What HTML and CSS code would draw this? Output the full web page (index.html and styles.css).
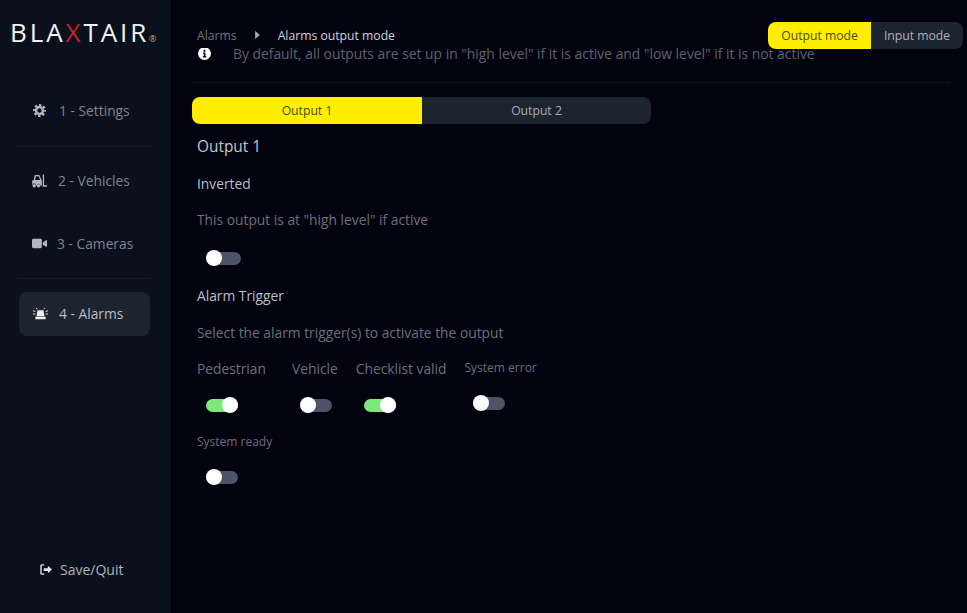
FILE: index.html
```html
<!DOCTYPE html>
<html lang="en">
<head>
    <meta charset="UTF-8">
    <meta name="viewport" content="width=device-width, initial-scale=1.0">
    <title>Blaxtair - Alarms output mode</title>
    <link rel="stylesheet" href="styles.css">
</head>
<body>
    <div class="app">
        <aside class="sidebar">
            <div class="logo">BLA<span class="logo-red">X</span>TAIR<span class="logo-reg">®</span></div>
            <nav class="nav">
                <a class="nav-item nav-settings">
                    <svg class="nav-icon" viewBox="0 0 16 16">
                        <circle cx="8" cy="8" r="4.200" fill="none" stroke="currentColor" stroke-width="3"/>
                        <circle cx="8" cy="8" r="6.600" fill="none" stroke="currentColor" stroke-width="2.800" stroke-dasharray="2.900 2.280" stroke-dashoffset="1.450"/>
                    </svg>
                    <span>1 - Settings</span>
                </a>
                <a class="nav-item nav-vehicles">
                    <svg class="nav-icon nav-icon-wide nav-icon-tall" viewBox="0 0 16 14"><path fill="currentColor" fill-rule="evenodd" d="M3 .5h4.800L10.500 6.500V12H9a2 2 0 0 0-4 0H4.200a2 2 0 0 0-4-.8V6.500L1.800 6zM4.200 1.800 3.300 6h5.600L7 1.800z"/><circle fill="currentColor" cx="2.300" cy="12" r="1.800"/><circle fill="currentColor" cx="7" cy="12" r="1.800"/><path fill="currentColor" d="M11.500 0h1.400v11.600H16V13h-4.500z"/></svg>
                    <span>2 - Vehicles</span>
                </a>
                <a class="nav-item nav-cameras">
                    <svg class="nav-icon nav-icon-wide" viewBox="0 0 16 12"><rect fill="currentColor" y="1" width="10.500" height="10" rx="1.500"/><path fill="currentColor" d="M11.500 4.800 15 2.500c.5-.3 1 0 1 .5v6c0 .5-.5.800-1 .5l-3.500-2.300z"/></svg>
                    <span>3 - Cameras</span>
                </a>
                <a class="nav-item nav-alarms">
                    <svg class="nav-icon nav-icon-wide" viewBox="0 0 16 13"><path fill="currentColor" d="M4.800 3h6.400l1 6.500H3.800zM2.500 10h11v2.500h-11z"/><path stroke="currentColor" stroke-width="1" d="M0 3.500l2.500 1M0 7h2.500M16 3.500l-2.500 1M16 7h-2.500M3.500 .5l1 1.500M12.500 .5l-1 1.500"/></svg>
                    <span>4 - Alarms</span>
                </a>
            </nav>
            <a class="save-quit">
                <svg class="save-icon" viewBox="0 0 14 12"><path fill="none" stroke="currentColor" stroke-width="1.500" d="M4.500 1H2a1 1 0 0 0-1 1v8a1 1 0 0 0 1 1h2.500"/><path fill="currentColor" d="M4 4.500h4.500V1.800L13 6l-4.500 4.200V7.500H4z"/></svg>
                <span>Save/Quit</span>
            </a>
        </aside>

        <main class="main">
            <header class="topbar">
                <div class="breadcrumb">
                    <span class="crumb-parent">Alarms</span>
                    <svg class="crumb-arrow" viewBox="0 0 6 10"><path fill="currentColor" d="M0 0l6 5-6 5z"/></svg>
                    <span class="crumb-current">Alarms output mode</span>
                </div>
                <div class="mode-switch">
                    <button class="mode-btn mode-active">Output mode</button>
                    <button class="mode-btn">Input mode</button>
                </div>
            </header>

            <div class="content">
                <div class="notice">
                    <svg class="notice-icon" viewBox="0 0 14 14"><circle fill="#fff" cx="7" cy="7" r="7"/><path fill="#03030f" d="M6 3h2v2H6zM5.500 6H8v4h1v1.200H5.200V10h1V7.200h-.7z"/></svg>
                    <span>By default, all outputs are set up in "high level" if it is active and "low level" if it is not active</span>
                </div>
                <div class="divider"></div>

                <div class="tabs">
                    <button class="tab tab-active">Output 1</button>
                    <button class="tab">Output 2</button>
                </div>

                <section class="form">
                    <h2 class="form-title">Output 1</h2>
                    <h3 class="form-heading">Inverted</h3>
                    <p class="form-text">This output is at "high level" if active</p>
                    <div class="toggle-line"><span class="toggle toggle-wide"></span></div>

                    <h3 class="form-heading heading-trigger">Alarm Trigger</h3>
                    <p class="form-text text-trigger">Select the alarm trigger(s) to activate the output</p>

                    <div class="triggers">
                        <div class="trigger trigger-first">
                            <label>Pedestrian</label>
                            <span class="toggle toggle-on"></span>
                        </div>
                        <div class="trigger">
                            <label>Vehicle</label>
                            <span class="toggle"></span>
                        </div>
                        <div class="trigger">
                            <label>Checklist valid</label>
                            <span class="toggle toggle-on"></span>
                        </div>
                        <div class="trigger trigger-small">
                            <label>System error</label>
                            <span class="toggle"></span>
                        </div>
                        <div class="trigger trigger-small trigger-first">
                            <label>System ready</label>
                            <span class="toggle"></span>
                        </div>
                    </div>
                </section>
            </div>
        </main>
    </div>
</body>
</html>
```

FILE: styles.css
```css
* {
    box-sizing: border-box;
}
html, body {
    height: 100%;
    margin: 0;
    font-family: 'Open Sans', 'Noto Sans', sans-serif;
    background-color: #03030f;
    color: #8b8e99;
}
button {
    font-family: inherit;
    border: none;
    cursor: pointer;
}
.app {
    display: flex;
    height: 613px;
    overflow: hidden;
}

/* sidebar */
.sidebar {
    width: 171px;
    flex-shrink: 0;
    display: flex;
    flex-direction: column;
    background-color: #0a111c;
}
.logo {
    height: 78px;
    padding: 17px 0 0 10px;
    font-size: 26px;
    line-height: 30px;
    font-weight: 400;
    letter-spacing: 2.9px;
    color: #f2f2f2;
    white-space: nowrap;
}
.logo-red {
    color: #c4202c;
}
.logo-reg {
    font-size: 9px;
    letter-spacing: 0;
    color: #aaa;
}
.nav {
    display: flex;
    flex-direction: column;
    padding: 0 21px 0 18px;
}
.nav-item {
    display: flex;
    align-items: center;
    font-size: 13.800px;
    color: #80848f;
}
.nav-icon {
    width: 13px;
    height: 13px;
    margin: 0 13px 0 15px;
    color: #b5b7bf;
}
.nav-icon-wide {
    width: 15px;
    margin: 0 10px 0 14px;
}
.nav-icon-tall {
    height: 14px;
    margin-right: 11px;
}
.nav-settings {
    height: 69px;
    padding-bottom: 3px;
    border-bottom: 1px solid #161d28;
}
.nav-vehicles {
    height: 69px;
    padding-bottom: 2px;
}
.nav-cameras {
    height: 63px;
    padding-bottom: 8px;
    border-bottom: 1px solid #161d28;
}
.nav-alarms {
    height: 44px;
    margin: 13px 0 0 1px;
    padding-bottom: 2px;
    border-radius: 8px;
    background-color: #1c2430;
    color: #b9bcc5;
}
.nav-alarms .nav-icon {
    margin-right: 11px;
    color: #f0f0f0;
}
.save-quit {
    display: flex;
    align-items: center;
    margin: auto 0 34px 40px;
    font-size: 14px;
    color: #b0b3bb;
}
.save-icon {
    width: 13px;
    height: 11px;
    margin-right: 7px;
    color: #e6e6e6;
}

/* main */
.main {
    flex: 1;
    display: flex;
    flex-direction: column;
    min-width: 0;
    overflow: hidden;
}
.topbar {
    position: relative;
    z-index: 2;
    height: 48px;
    flex-shrink: 0;
    display: flex;
    align-items: flex-start;
    justify-content: space-between;
    padding: 22px 4px 0 26px;
    background-color: #03030f;
}
.breadcrumb {
    display: flex;
    align-items: center;
    height: 26px;
    font-size: 12.200px;
}
.crumb-parent {
    color: #71747f;
}
.crumb-arrow {
    width: 5px;
    height: 8px;
    margin: 0 18px;
    color: #a5a7ae;
}
.crumb-current {
    color: #d2d3d8;
}
.mode-switch {
    display: flex;
    border-radius: 8px;
    overflow: hidden;
}
.mode-btn {
    width: 92px;
    height: 27px;
    padding: 0;
    font-size: 12.200px;
    color: #aeb1b9;
    background-color: #1c2430;
}
.mode-active {
    width: 103px;
    color: #4a4a10;
    background-color: #ffee00;
}
.content {
    margin-top: -7px;
    padding: 0 17px 0 21px;
}
.notice {
    display: flex;
    align-items: center;
    height: 24px;
    padding-left: 6px;
    font-size: 13.860px;
    white-space: nowrap;
    color: #5f626d;
}
.notice-icon {
    width: 13px;
    height: 13px;
    margin-right: 22px;
    flex-shrink: 0;
}
.divider {
    height: 1px;
    margin: 17px 0 14px;
    background-color: #10131c;
}
.tabs {
    display: flex;
    width: 459px;
    height: 27px;
    border-radius: 8px;
    overflow: hidden;
}
.tab {
    flex: 1;
    padding: 0;
    font-size: 12.200px;
    color: #a9acb4;
    background-color: #1c2430;
}
.tab-active {
    flex: none;
    width: 230px;
    color: #4a4a10;
    background-color: #ffee00;
}
.form {
    padding-left: 5px;
}
.form-title {
    margin: 13px 0 0;
    font-size: 15.400px;
    line-height: 20px;
    font-weight: 400;
    color: #c4c6cc;
}
.form-heading {
    margin: 17px 0 0;
    font-size: 13.800px;
    line-height: 20px;
    font-weight: 400;
    color: #bcbec5;
}
.heading-trigger {
    margin-top: 20px;
}
.form-text {
    margin: 16px 0 0;
    font-size: 13.800px;
    line-height: 20px;
    color: #6c6f7a;
}
.text-trigger {
    margin-top: 17px;
}
.toggle-line {
    display: flex;
    height: 16px;
    margin: 20px 0 0 9px;
}
.toggle {
    position: relative;
    display: block;
    width: 32px;
    height: 13px;
    margin-top: 2px;
    border-radius: 7px;
    background-color: #4d5468;
}
.toggle::after {
    content: "";
    position: absolute;
    top: -2px;
    left: 0;
    width: 16px;
    height: 16px;
    border-radius: 50%;
    background-color: #fff;
}
.toggle-wide {
    width: 35px;
}
.toggle-on {
    background-color: #7bea7b;
}
.toggle-on::after {
    left: 16px;
}
.triggers {
    display: flex;
    flex-wrap: wrap;
    width: 420px;
    margin-top: 16px;
    column-gap: 18px;
}
.trigger {
    height: 74px;
}
.trigger label {
    display: block;
    height: 20px;
    margin-bottom: 20px;
    font-size: 13.800px;
    line-height: 20px;
    color: #6c6f7a;
}
.trigger .toggle {
    margin-left: 8px;
}
.trigger-first {
    min-width: 77px;
}
.trigger-first .toggle {
    margin-left: 9px;
}
.trigger-small label {
    margin-bottom: 18px;
    font-size: 12px;
    line-height: 18px;
}
```
